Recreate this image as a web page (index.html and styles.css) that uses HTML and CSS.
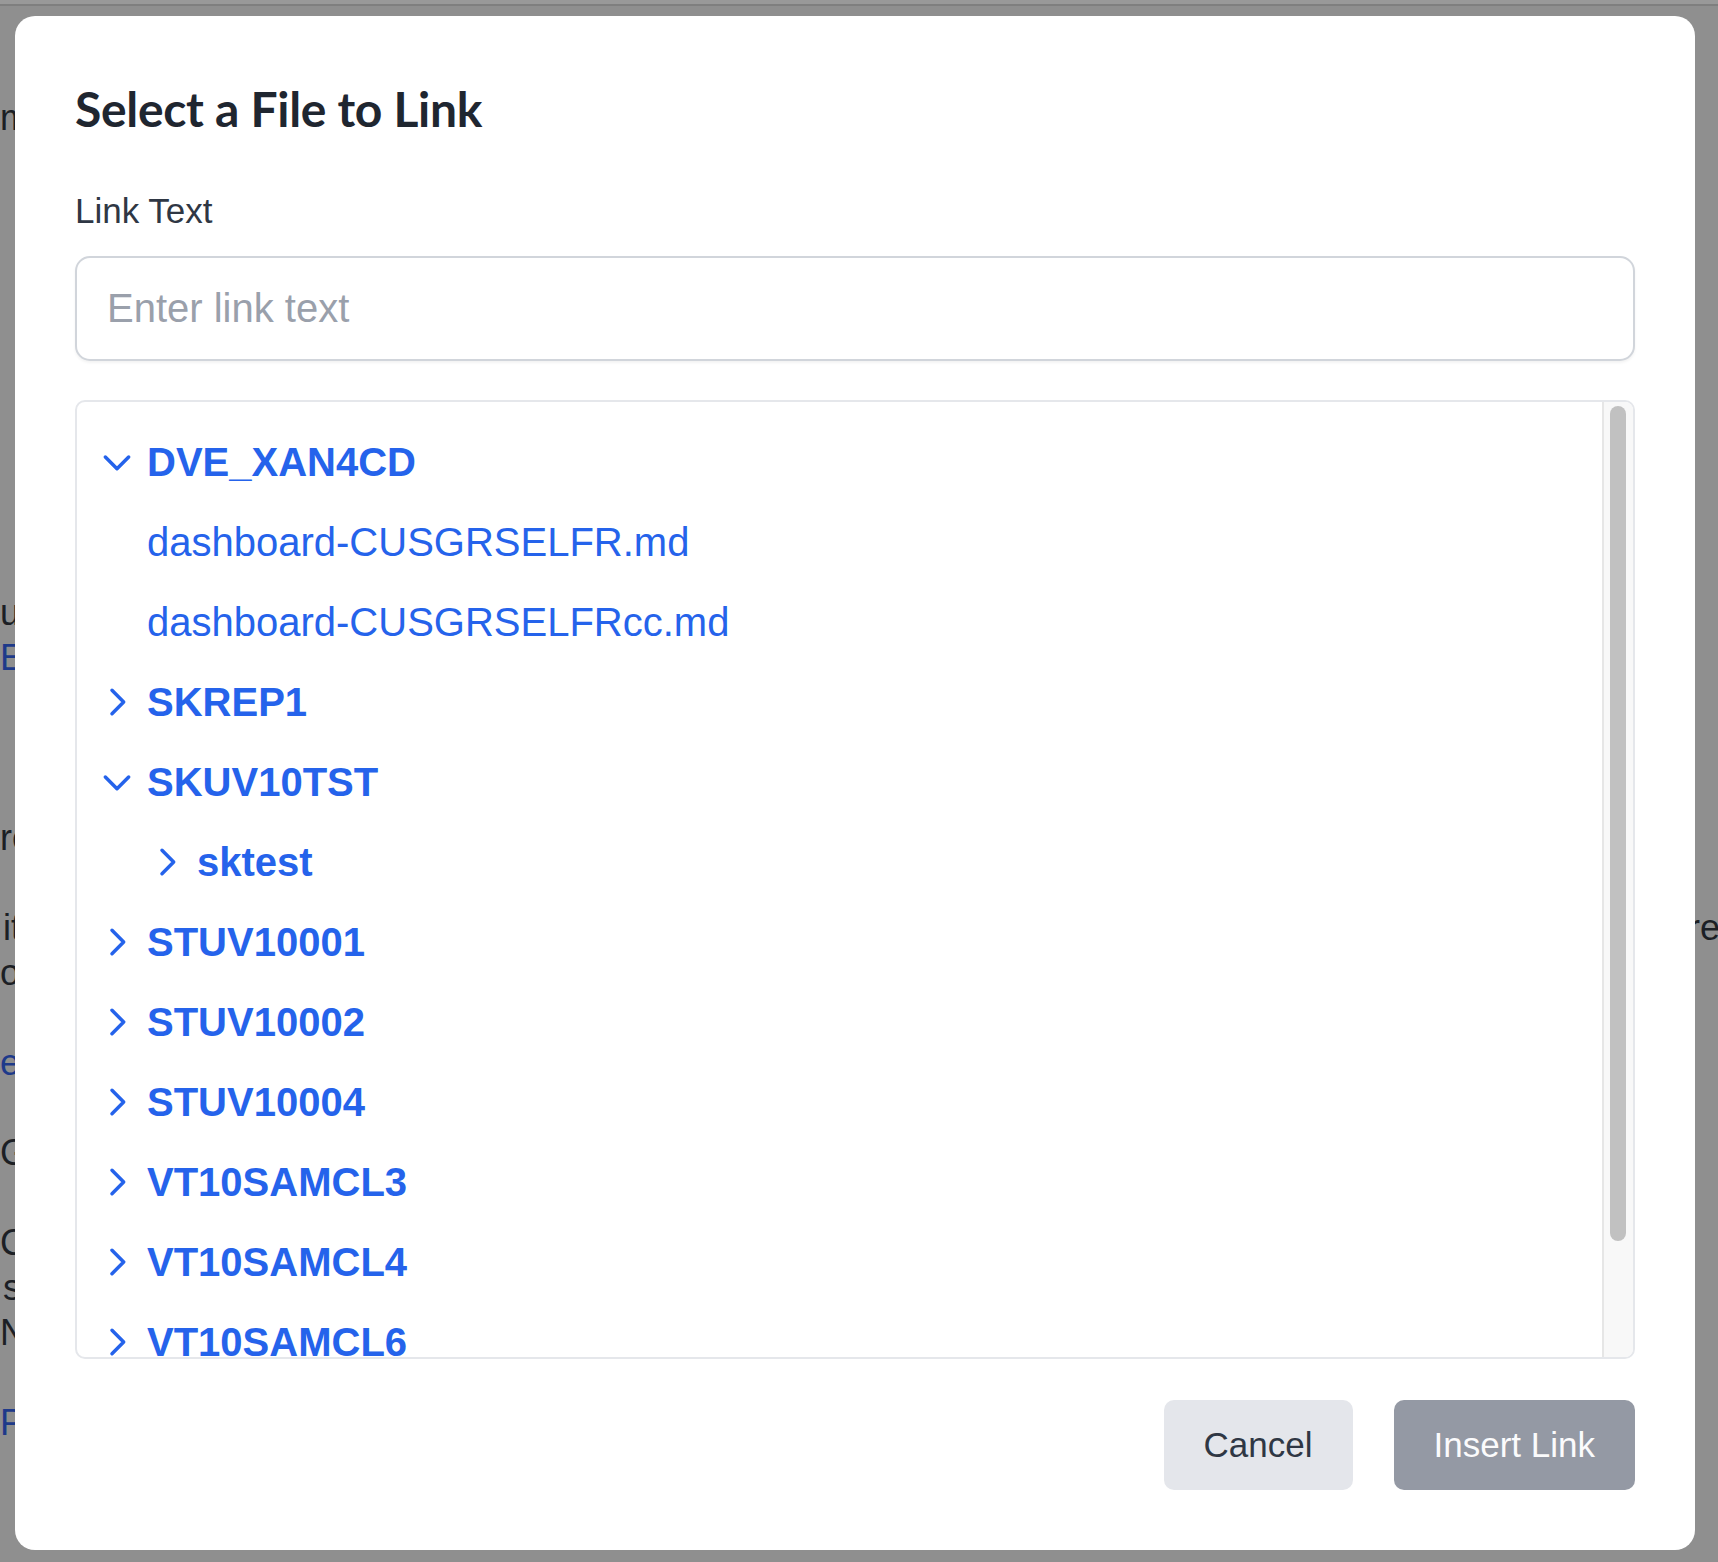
FILE: index.html
```html
<!DOCTYPE html>
<html lang="en">
<head>
  <meta charset="UTF-8">
  <title>Select a File to Link</title>
  <link rel="stylesheet" href="styles.css">
</head>
<body>
  <div class="page-behind">
    <div class="behind-left">m










ur
<span class="link">E</span>



re

it
og

<span class="link">er</span>

G

C
s
N

<span class="link">P/</span></div>
    <div class="behind-right">re</div>
  </div>

  <div class="topbar"></div>

  <div class="modal">
    <h2 class="modal-title">Select a File to Link</h2>

    <label class="field-label" for="linkText">Link Text</label>
    <input id="linkText" class="field-input" type="text" placeholder="Enter link text">

    <div class="tree">
      <div class="tree-list">
        <div class="row folder" style="padding-left: 0px">
          <svg class="chev" viewBox="0 0 24 24"><path d="M19 9l-7 7-7-7"/></svg>
          <span>DVE_XAN4CD</span>
        </div>
        <div class="row file" style="padding-left: 50px"><span>dashboard-CUSGRSELFR.md</span></div>
        <div class="row file" style="padding-left: 50px"><span>dashboard-CUSGRSELFRcc.md</span></div>
        <div class="row folder" style="padding-left: 0px">
          <svg class="chev" viewBox="0 0 24 24"><path d="M9 5l7 7-7 7"/></svg>
          <span>SKREP1</span>
        </div>
        <div class="row folder" style="padding-left: 0px">
          <svg class="chev" viewBox="0 0 24 24"><path d="M19 9l-7 7-7-7"/></svg>
          <span>SKUV10TST</span>
        </div>
        <div class="row folder" style="padding-left: 50px">
          <svg class="chev" viewBox="0 0 24 24"><path d="M9 5l7 7-7 7"/></svg>
          <span>sktest</span>
        </div>
        <div class="row folder" style="padding-left: 0px">
          <svg class="chev" viewBox="0 0 24 24"><path d="M9 5l7 7-7 7"/></svg>
          <span>STUV10001</span>
        </div>
        <div class="row folder" style="padding-left: 0px">
          <svg class="chev" viewBox="0 0 24 24"><path d="M9 5l7 7-7 7"/></svg>
          <span>STUV10002</span>
        </div>
        <div class="row folder" style="padding-left: 0px">
          <svg class="chev" viewBox="0 0 24 24"><path d="M9 5l7 7-7 7"/></svg>
          <span>STUV10004</span>
        </div>
        <div class="row folder" style="padding-left: 0px">
          <svg class="chev" viewBox="0 0 24 24"><path d="M9 5l7 7-7 7"/></svg>
          <span>VT10SAMCL3</span>
        </div>
        <div class="row folder" style="padding-left: 0px">
          <svg class="chev" viewBox="0 0 24 24"><path d="M9 5l7 7-7 7"/></svg>
          <span>VT10SAMCL4</span>
        </div>
        <div class="row folder" style="padding-left: 0px">
          <svg class="chev" viewBox="0 0 24 24"><path d="M9 5l7 7-7 7"/></svg>
          <span>VT10SAMCL6</span>
        </div>
      </div>
      <div class="scrollbar"><div class="scrollbar-thumb"></div></div>
    </div>

    <div class="modal-actions">
      <button class="btn btn-cancel">Cancel</button>
      <button class="btn btn-insert" disabled>Insert Link</button>
    </div>
  </div>
</body>
</html>
```

FILE: styles.css
```css
* {
  box-sizing: border-box;
}
html, body {
  margin: 0;
  width: 1718px;
  height: 1562px;
  overflow: hidden;
}
body {
  position: relative;
  background: #8f8f8f;
  font-family: "Liberation Sans", Arial, sans-serif;
}

/* dimmed page peeking out behind the modal */
.page-behind {
  position: absolute;
  top: 0;
  left: 0;
  right: 0;
  bottom: 0;
  display: flex;
  justify-content: space-between;
  padding-top: 95px;
  font-size: 36px;
  line-height: 45px;
  color: #1c1f25;
}
.behind-left {
  width: 21px;
  text-align: right;
  white-space: pre;
}
.behind-right {
  width: 30px;
  margin-top: 810px;
  white-space: nowrap;
}
.page-behind .link {
  color: #1e3a8a;
}

.topbar {
  position: relative;
  height: 6px;
  background: #999;
  border-bottom: 2px solid #7f7f7f;
}

.modal {
  position: relative;
  width: 1680px;
  height: 1534px;
  margin: 10px 0 0 15px;
  padding: 60px;
  background: #fff;
  border-radius: 20px;
  display: flex;
  flex-direction: column;
}
.modal-title {
  margin: 0 0 44px;
  font-family: "Lato", "Noto Sans", sans-serif;
  font-size: 48px;
  line-height: 66px;
  font-weight: 700;
  letter-spacing: -0.3px;
  color: #1f2630;
}
.field-label {
  display: block;
  font-size: 35px;
  line-height: 50px;
  color: #2f3744;
  margin-bottom: 20px;
}
.field-input {
  width: 100%;
  height: 105px;
  padding: 0 30px;
  border: 2px solid #d1d5db;
  border-radius: 15px;
  font-family: "Liberation Sans", Arial, sans-serif;
  font-size: 40px;
  color: #1f2937;
  box-shadow: 0 2px 3px rgba(0,0,0,0.05);
  margin-bottom: 39px;
  outline: none;
}
.field-input::placeholder {
  color: #9aa0ab;
}

.tree {
  height: 959px;
  border: 2px solid #e5e7eb;
  border-radius: 10px;
  display: flex;
  overflow: hidden;
}
.tree-list {
  flex: 1;
  padding: 20px;
  overflow: hidden;
}
.scrollbar {
  width: 31px;
  flex-shrink: 0;
  background: #f8f8f8;
  border-left: 2px solid #e6e6e6;
  padding: 4px 0 0 6px;
}
.scrollbar-thumb {
  width: 16px;
  height: 835px;
  background: #c1c1c1;
  border-radius: 8px;
}
.row {
  height: 80px;
  display: flex;
  align-items: center;
  font-size: 40px;
  line-height: 60px;
  color: #2563eb;
  white-space: nowrap;
}
.row.folder {
  font-weight: 700;
}
.chev {
  width: 40px;
  height: 40px;
  margin-right: 10px;
  flex-shrink: 0;
  fill: none;
  stroke: #2563eb;
  stroke-width: 2.1;
  stroke-linecap: round;
  stroke-linejoin: round;
}

.modal-actions {
  display: flex;
  justify-content: flex-end;
  gap: 41px;
  margin-top: 41px;
}
.btn {
  height: 90px;
  padding: 0 40px;
  border: none;
  border-radius: 10px;
  font-family: "Liberation Sans", Arial, sans-serif;
  font-size: 35px;
  cursor: pointer;
}
.btn-cancel {
  background: #e4e6eb;
  color: #2f3744;
}
.btn-insert {
  background: #9499a4;
  color: #fbfbfc;
}
```
